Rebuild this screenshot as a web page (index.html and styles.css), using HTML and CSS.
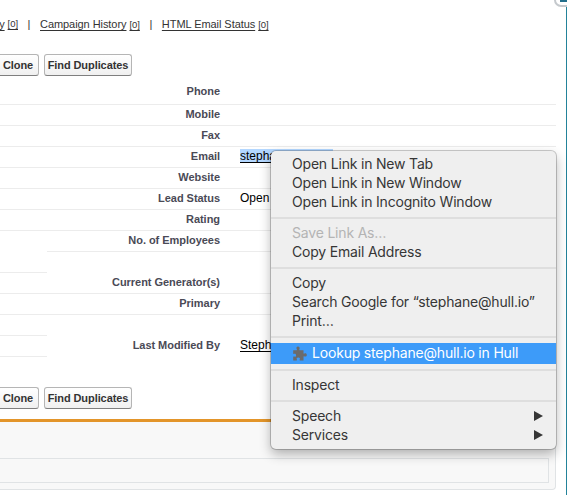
FILE: index.html
```html
<!DOCTYPE html>
<html lang="en">
<head>
<meta charset="utf-8">
<title>Lead</title>
<link rel="stylesheet" href="styles.css">
</head>
<body>
<div class="page">
  <main class="detail">
    <nav class="links">
      <a class="cut"><u>y</u> <small>[0]</small></a><i>|</i><a><u>Campaign History</u> <small>[0]</small></a><i>|</i><a><u>HTML Email Status</u> <small>[0]</small></a>
    </nav>
    <div class="buttons"><button class="clone">Clone</button><button class="find">Find Duplicates</button></div>
    <div class="rows">
      <div class="row first"><span class="gap"></span><b>Phone</b><span class="value"></span></div>
      <div class="row"><span class="gap"></span><b>Mobile</b><span class="value"></span></div>
      <div class="row"><span class="gap"></span><b>Fax</b><span class="value"></span></div>
      <div class="row"><span class="gap"></span><b>Email</b><span class="value"><a class="selected">stephane@hull.io</a></span></div>
      <div class="row"><span class="gap"></span><b>Website</b><span class="value"></span></div>
      <div class="row"><span class="gap"></span><b>Lead Status</b><span class="value">Open</span></div>
      <div class="row"><span class="gap"></span><b>Rating</b><span class="value"></span></div>
      <div class="row right-only"><span class="gap"></span><b>No. of Employees</b><span class="value"></span></div>
      <div class="row left-only"><span class="gap"></span><b></b><span class="value"></span></div>
      <div class="row"><span class="gap"></span><b>Current Generator(s)</b><span class="value"></span></div>
      <div class="row"><span class="gap"></span><b>Primary</b><span class="value"></span></div>
      <div class="row left-only"><span class="gap"></span><b></b><span class="value"></span></div>
      <div class="row left-only"><span class="gap"></span><b>Last Modified By</b><span class="value"><a>Stephane</a></span></div>
    </div>
    <div class="buttons lower"><button class="clone">Clone</button><button class="find">Find Duplicates</button></div>
    <section class="related"><div class="related-body"></div></section>
  </main>
  <aside class="side-edge"></aside>
  <div class="side-toggle"></div>

  <div class="menu">
    <div class="item">Open Link in New Tab</div>
    <div class="item">Open Link in New Window</div>
    <div class="item">Open Link in Incognito Window</div>
    <hr>
    <div class="item disabled">Save Link As…</div>
    <div class="item">Copy Email Address</div>
    <hr>
    <div class="item">Copy</div>
    <div class="item">Search Google for “stephane@hull.io”</div>
    <div class="item">Print…</div>
    <hr>
    <div class="item active"><svg viewBox="0 0 15 15" width="15" height="15"><path d="M1.200 4.200h3.400c.5 0 .5-.4.2-.9C4 1.700 4.700.5 6 .5s2.100 1.200 1.400 2.700c-.2.600-.2 1 .4 1H11.500v3c0 .5.4.6.9.3 1.200-.7 2.400 0 2.400 1.400s-1.200 2.100-2.400 1.500c-.5-.3-.9-.2-.9.4v3.700H8c-.5 0-.6-.4-.3-.9.600-1.200 0-2.100-1.400-2.100s-2 .9-1.400 2.100c.2.5.1.9-.4.9H1.200V11c0-.5.3-.6.9-.4 1.200.5 2-.2 2-1.400s-.8-1.900-2-1.400c-.6.3-.9.1-.9-.4z"/></svg><span>Lookup stephane@hull.io in Hull</span></div>
    <hr>
    <div class="item">Inspect</div>
    <hr>
    <div class="item parent">Speech</div>
    <div class="item parent">Services</div>
  </div>
</div>
</body>
</html>
```
FILE: styles.css
```css
* { box-sizing: border-box; }
body { margin: 0; background: #fff; }
.page {
  position: relative;
  display: flex;
  width: 567px;
  height: 495px;
  overflow: hidden;
  font-family: "Liberation Sans", Arial, sans-serif;
  font-size: 11px;
  color: #333;
}
.detail { width: 556px; display: flex; flex-direction: column; }
.links { height: 54px; padding-top: 17px; line-height: 14px; white-space: nowrap; display: flex; letter-spacing: -0.06px; }
.links u { text-underline-offset: 2px; }
.links small { font-size: 9.5px; text-decoration: underline; text-underline-offset: 2px; }
.links i { font-style: normal; width: 22px; text-align: center; }
.links a.cut { width: 18px; display: flex; justify-content: flex-end; gap: 3px; }
.buttons { display: flex; gap: 5px; height: 22px; }
button {
  height: 22px;
  padding: 0;
  border: 1px solid #b5b5b5;
  border-bottom-color: #7f7f7f;
  border-radius: 3px;
  background: linear-gradient(#fff, #f0f0f0);
  font: bold 11px "Liberation Sans", Arial, sans-serif;
  letter-spacing: -0.08px;
  color: #333;
}
.clone { width: 42px; margin-left: -3px; }
.find { width: 88px; }
.rows { padding-top: 5px; }
.row {
  display: grid;
  grid-template-columns: 47px 173px 1fr;
  height: 21px;
  line-height: 18px;
}
.row > * { border-bottom: 1px solid #ececec; }
.row.first { height: 24px; }
.row.first b { line-height: 20px; }
.row b { text-align: right; color: #4a4a56; letter-spacing: -0.04px; }
.value { padding-left: 20px; font-size: 12px; color: #000; }
.value a { text-decoration: underline; text-underline-offset: 2px; }
.selected { display: inline-block; height: 14px; line-height: 14px; width: 93px; background: #b3d7ff; vertical-align: top; margin-top: 2px; }
.right-only .gap, .left-only b, .left-only .value { border-color: transparent; }
.lower { margin-top: 30px; }
.related {
  height: 71px;
  margin-top: 10px;
  padding: 36px 6px 7px 0;
  border: solid #e0e3e5;
  border-width: 3px 1px 1px 0;
  border-top-color: #e3952a;
  border-radius: 0 0 4px 0;
  background: #f8f8f8;
}
.related-body { height: 25px; border: 1px solid #e0e3e5; border-left: 0; }
.side-edge { width: 1px; margin-left: 10px; background: #23839a; }
.side-toggle {
  position: absolute;
  left: 554px;
  top: -13px;
  width: 26px;
  height: 20px;
  border: 2px solid #c5c9cd;
  border-radius: 7px;
  background: linear-gradient(#236f8c, #236f8c) 4px 0 / 20px 13px no-repeat #fff;
}
.menu {
  position: absolute;
  left: 271px;
  top: 151px;
  width: 285px;
  height: 298px;
  padding: 4px 0;
  border-radius: 5px;
  background: #efefef;
  box-shadow: 0 0 0 1px rgba(0,0,0,.2), 0 5px 12px rgba(0,0,0,.3);
  font: 14px "Inter", sans-serif;
  letter-spacing: -0.19px;
  color: #363636;
  white-space: nowrap;
}
.item { height: 19px; line-height: 17px; padding: 0 17px 2px 21px; display: flex; align-items: center; }
.disabled { color: #b4b4b4; }
.active { height: 21px; gap: 5px; background: #3d9bf9; color: #fff; }
.active svg { fill: #6b6b6b; margin-top: 1px; }
.menu hr { height: 2px; margin: 5px 0; border: 0; background: #dedede; }
.parent { justify-content: space-between; padding-right: 13px; }
.parent::after { content: ""; border: solid transparent; border-width: 5px 0 5px 9px; border-left-color: #363636; }
```
